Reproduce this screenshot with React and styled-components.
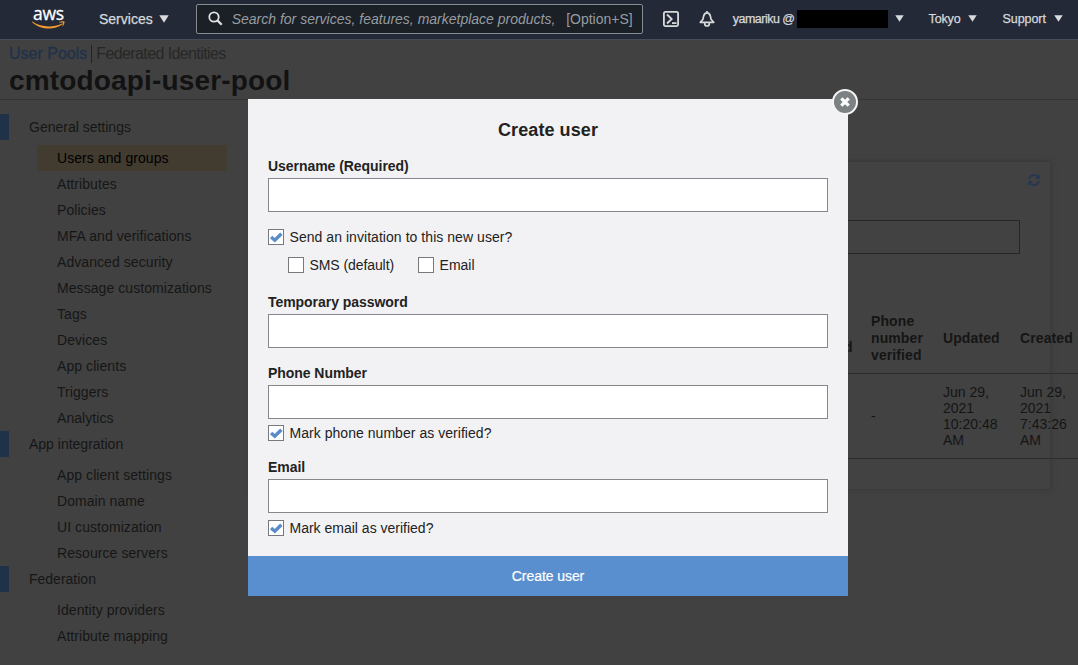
import React from "react";
import styled, { createGlobalStyle } from "styled-components";

const GlobalStyle = createGlobalStyle`
  *, *::before, *::after { box-sizing: border-box; }
  body {
    margin: 0;
    background: #414141;
    font-family: "Liberation Sans", Helvetica, Arial, sans-serif;
    font-size: 14px;
    overflow: hidden;
  }
`;

const Page = styled.div`
  position: relative;
  width: 1078px;
  height: 665px;
  overflow: hidden;
  white-space: nowrap;
`;

/* ---------- top navigation ---------- */

const TopNav = styled.header`
  display: flex;
  align-items: center;
  height: 40px;
  padding: 0 15px 2px 32px;
  background: #242937;
  border-bottom: 1px solid #474b5a;
  color: #d8dadc;
`;

const Logo = styled.div`
  flex: none;
  width: 33px;
  height: 22px;
  margin-right: 34px;
  display: flex;
  flex-direction: column;
  align-items: center;
  color: #fff;
`;

const LogoText = styled.span`
  height: 13px;
  font: 17.5px/10px "Open Sans", sans-serif;
  font-weight: 500;
  letter-spacing: -0.2px;
  -webkit-text-stroke: 0.3px #fff;
`;

const NavItem = styled.div`
  flex: none;
  display: flex;
  align-items: center;
  gap: ${(p) => p.$gap || 8}px;
  margin-right: ${(p) => p.$after || 0}px;
  font-size: ${(p) => p.$size || 12.5}px;
  letter-spacing: ${(p) => p.$track || 0}px;
  -webkit-text-stroke: 0.25px currentColor;
`;

const SearchBox = styled.div`
  flex: none;
  display: flex;
  align-items: center;
  width: 447px;
  height: 30px;
  margin-right: 20px;
  padding: 0 9px 0 11px;
  border: 1px solid #858d90;
  border-radius: 2px;
  background: #1b1f26;
  color: #969da1;
`;

const SearchHint = styled.span`
  flex: 1;
  margin-left: 9px;
  font-style: italic;
  font-size: 14px;
`;

const Redacted = styled.span`
  width: 91px;
  height: 18px;
  margin: 0 -1px 0 -6px;
  background: #000;
`;

const Triangle = ({ w = 9, h = 7 }) => (
  <svg width={w} height={h} viewBox="0 0 10 8" preserveAspectRatio="none">
    <path d="M0.3 0.3H9.7L5 7.8Z" fill="#d8dadc" />
  </svg>
);

/* ---------- page heading ---------- */

const Heading = styled.div`
  height: 60px;
  padding: 4px 9px 0;
  border-bottom: 1px solid #343434;
`;

const Crumbs = styled.div`
  display: flex;
  align-items: center;
  height: 19px;
  font-size: 16px;
  color: #272727;
`;

const PoolsLink = styled.span`
  padding-right: 4px;
  margin-right: 4px;
  border-right: 1px solid #222;
  color: #20314a;
  -webkit-text-stroke: 0.3px currentColor;
`;

const CrumbText = styled.span`
  letter-spacing: -0.6px;
`;

const PoolName = styled.h1`
  margin: 2px 0 0;
  font-size: 28px;
  line-height: 32px;
  font-weight: bold;
  letter-spacing: 0.16px;
  color: #121212;
`;

/* ---------- side menu ---------- */

const Columns = styled.div`
  display: flex;
  align-items: flex-start;
`;

const SideMenu = styled.nav`
  flex: none;
  width: 250px;
  padding-top: 14px;
  line-height: 26px;
  letter-spacing: 0.07px;
  color: #161616;
`;

const Section = styled.div`
  height: 26px;
  margin-bottom: 5px;
  padding-left: 20px;
  border-left: 9px solid #1f3248;
  letter-spacing: 0;
`;

const MenuItem = styled.div`
  width: 190px;
  height: 26px;
  margin-left: 37px;
  padding-left: 20px;
  border-radius: 1px;
  background: ${(p) => (p.$active ? "#423b30" : "transparent")};
  color: ${(p) => (p.$active ? "#000" : "inherit")};
`;

/* ---------- users card ---------- */

const Card = styled.section`
  flex: none;
  width: 800px;
  height: 327px;
  margin-top: 62px;
  padding: 12px 30px 0 30px;
  background: #424242;
  box-shadow: 0 0 5px 1px #383838;
`;

const CardTools = styled.div`
  display: flex;
  justify-content: flex-end;
  height: 46px;
  margin-right: -20px;
`;

const CardSearch = styled.div`
  height: 34px;
  border: 1px solid #25262a;
`;

const TableRow = styled.div`
  display: grid;
  grid-template-columns: 150px 90px 140px 132px 69px 72px 77px 90px;
  align-items: center;
  width: 820px;
  height: ${(p) => (p.$head ? 72 : 85)}px;
  margin-top: ${(p) => (p.$head ? 48 : 0)}px;
  padding-top: ${(p) => (p.$head ? 2 : 0)}px;
  border-bottom: 1px solid #2d2d2d;
  line-height: ${(p) => (p.$head ? 17 : 16)}px;
  font-weight: ${(p) => (p.$head ? "bold" : "normal")};
  letter-spacing: ${(p) => (p.$head ? 0.1 : 0)}px;
  color: #151515;
`;

const Cell = styled.div`
  padding-left: 10px;
  white-space: pre-line;
`;

/* ---------- dialog ---------- */

const Dialog = styled.div`
  position: absolute;
  top: 99px;
  left: 248px;
  width: 600px;
  height: 497px;
  background: #f2f2f4;
  color: #222;
`;

const DialogBody = styled.div`
  height: 457px;
  padding: 20px 20px 0;
`;

const DialogTitle = styled.h2`
  margin: 0 0 17px;
  text-align: center;
  font-size: 18px;
  line-height: 22px;
  letter-spacing: 0.08px;
`;

const Label = styled.label`
  display: block;
  margin-bottom: 4px;
  line-height: 16px;
  font-weight: bold;
  letter-spacing: -0.05px;
`;

const Field = styled.div`
  margin-bottom: ${(p) => p.$after}px;
`;

const TextInput = styled.input`
  display: block;
  width: 560px;
  height: 34px;
  padding: 0 8px;
  border: 1px solid #86878b;
  border-radius: 0;
  background: #fff;
  outline: none;
`;

const CheckRow = styled.div`
  display: flex;
  gap: 24px;
  height: 16px;
  margin-left: ${(p) => p.$indent || 0}px;
  margin-bottom: ${(p) => p.$after || 0}px;
`;

const CheckLabel = styled.div`
  display: flex;
  gap: 5.5px;
  line-height: 16px;
  letter-spacing: ${(p) => p.$track || 0}px;
`;

const Box = styled.span`
  display: flex;
  width: 16px;
  height: 16px;
  border: 1px solid #77797d;
  background: #fff;
`;

const SubmitButton = styled.button`
  display: block;
  width: 100%;
  height: 40px;
  border: 0;
  background: #5a8fcf;
  color: #fff;
  font: 14px "Liberation Sans", Helvetica, Arial, sans-serif;
  letter-spacing: -0.07px;
  -webkit-text-stroke: 0.2px #fff;
`;

const CloseButton = styled.button`
  position: absolute;
  top: -10px;
  right: -10px;
  display: grid;
  place-items: center;
  width: 26px;
  height: 26px;
  padding: 0;
  border: 2px solid #f5f5f6;
  border-radius: 50%;
  background: #7c8184;
`;

const Check = ({ checked, children, track }) => (
  <CheckLabel $track={track}>
    <Box>
      {checked && (
        <svg width="14" height="14" viewBox="0 0 14 14">
          <path d="M2.1 7L5.8 10.200L12.4 3.700" fill="none" stroke="#5a8bc9" strokeWidth="3.400" />
        </svg>
      )}
    </Box>
    <span>{children}</span>
  </CheckLabel>
);

const menu = [
  {
    title: "General settings",
    items: [
      "Users and groups",
      "Attributes",
      "Policies",
      "MFA and verifications",
      "Advanced security",
      "Message customizations",
      "Tags",
      "Devices",
      "App clients",
      "Triggers",
      "Analytics",
    ],
  },
  {
    title: "App integration",
    items: ["App client settings", "Domain name", "UI customization", "Resource servers"],
  },
  { title: "Federation", items: ["Identity providers", "Attribute mapping"] },
];

export default function App() {
  return (
    <Page>
      <GlobalStyle />
      <TopNav>
        <Logo>
          <LogoText>aws</LogoText>
          <svg width="33" height="9" viewBox="0 0 33 9">
            <path d="M0.3 0.600C9 6.500 21 6.800 29.500 2.700C30.600 2.200 31 3 30.200 3.600C22 9.500 8.500 9 0.100 1.200C-0.200 0.800 0 0.400 0.300 0.600Z" fill="#f29a2e" />
            <path d="M27.300 1.100C29 -0.100 32 0 32.400 0.500C32.800 1.100 32.200 3.900 30.700 5.200C30.300 5.500 30.100 5.300 30.300 4.900C30.700 3.900 31.300 2.100 31 1.700C30.700 1.300 28.800 1.400 27.700 1.600C27.200 1.700 27 1.400 27.300 1.100Z" fill="#f29a2e" />
          </svg>
        </Logo>
        <NavItem $size={14} $gap={6} $after={27}>
          Services <Triangle w={10} h={8} />
        </NavItem>
        <SearchBox>
          <svg width="15" height="15" viewBox="0 0 15 15" fill="none" stroke="#dfe1e2" strokeWidth="1.8">
            <circle cx="6" cy="6" r="4.700" />
            <path d="M9.400 9.400L13.700 13.700" strokeWidth="2.200" />
          </svg>
          <SearchHint>Search for services, features, marketplace products,</SearchHint>
          <span>[Option+S]</span>
        </SearchBox>
        <NavItem $after={20}>
          <svg width="16" height="16" viewBox="0 0 16 16" fill="none" stroke="#d8dadc" strokeWidth="1.8">
            <rect x="0.900" y="0.900" width="14.200" height="14.200" rx="1.500" />
            <path d="M4 3.500L8.700 8L4 12.500M9 12.200H13.500" />
          </svg>
        </NavItem>
        <NavItem $after={18}>
          <svg width="16" height="16" viewBox="0 0 16 16" fill="none" stroke="#d8dadc" strokeWidth="1.700" strokeLinejoin="round">
            <path d="M8 0V2M1.300 11.300H14.700L12 8.200L11.400 5.200C10.900 3 9.800 1.900 8 1.900S5.100 3 4.600 5.200L4 8.200Z" />
            <path d="M5.700 11.500V12.700C5.700 14.200 6.700 15 8 15S10.300 14.200 10.300 12.700V11.500" />
          </svg>
        </NavItem>
        <NavItem $after={25} $size={12.5} $track={-0.5}>
          yamariku @ <Redacted />
          <Triangle />
        </NavItem>
        <NavItem $after={25} $track={-0.15}>
          Tokyo <Triangle />
        </NavItem>
        <NavItem $track={-0.05}>
          Support <Triangle />
        </NavItem>
      </TopNav>

      <Heading>
        <Crumbs>
          <PoolsLink>User Pools</PoolsLink>
          <CrumbText>Federated Identities</CrumbText>
        </Crumbs>
        <PoolName>cmtodoapi-user-pool</PoolName>
      </Heading>

      <Columns>
        <SideMenu>
          {menu.map((group) => (
            <React.Fragment key={group.title}>
              <Section>{group.title}</Section>
              {group.items.map((item) => (
                <MenuItem key={item} $active={item === "Users and groups"}>
                  {item}
                </MenuItem>
              ))}
            </React.Fragment>
          ))}
        </SideMenu>

        <Card>
          <CardTools>
            <svg width="12" height="12" viewBox="0 0 1536 1536" preserveAspectRatio="none" fill="#26384f">
              <path d="M1511 928q0 5-1 7-64 268-268 434.500T764 1536q-146 0-282.500-55T238 1324l-129 129q-19 19-45 19t-45-19-19-45V960q0-26 19-45t45-19h448q26 0 45 19t19 45-19 45l-137 137q71 66 161 102t187 36q134 0 250-65t186-179q11-17 53-117 8-23 30-23h192q13 0 22.500 9.500t9.500 22.500zm25-800v448q0 26-19 45t-45 19h-448q-26 0-45-19t-19-45 19-45l138-138Q969 256 768 256q-134 0-250 65T332 500q-11 17-53 117-8 23-30 23H50q-13 0-22.500-9.500T18 608v-7q65-268 270-434.500T768 0q146 0 284 55.500T1297 212l130-129q19-19 45-19t45 19 19 45z" />
            </svg>
          </CardTools>
          <CardSearch />
          <TableRow $head>
            <Cell />
            <Cell />
            <Cell />
            <Cell />
            <Cell>{"Email\nverified"}</Cell>
            <Cell>{"Phone\nnumber\nverified"}</Cell>
            <Cell>Updated</Cell>
            <Cell>Created</Cell>
          </TableRow>
          <TableRow>
            <Cell />
            <Cell />
            <Cell />
            <Cell />
            <Cell />
            <Cell>-</Cell>
            <Cell>{"Jun 29,\n2021\n10:20:48\nAM"}</Cell>
            <Cell>{"Jun 29,\n2021\n7:43:26\nAM"}</Cell>
          </TableRow>
        </Card>
      </Columns>

      <Dialog role="dialog">
        <DialogBody>
          <DialogTitle>Create user</DialogTitle>
          <Field $after={17}>
            <Label>Username (Required)</Label>
            <TextInput />
          </Field>
          <CheckRow $after={12}>
            <Check checked track={0.05}>Send an invitation to this new user?</Check>
          </CheckRow>
          <CheckRow $indent={20} $after={21}>
            <Check track={-0.08}>SMS (default)</Check>
            <Check>Email</Check>
          </CheckRow>
          <Field $after={17}>
            <Label>Temporary password</Label>
            <TextInput />
          </Field>
          <Field $after={6}>
            <Label>Phone Number</Label>
            <TextInput />
          </Field>
          <CheckRow $after={18}>
            <Check checked track={0.04}>Mark phone number as verified?</Check>
          </CheckRow>
          <Field $after={7}>
            <Label>Email</Label>
            <TextInput />
          </Field>
          <CheckRow>
            <Check checked>Mark email as verified?</Check>
          </CheckRow>
        </DialogBody>
        <SubmitButton>Create user</SubmitButton>
        <CloseButton aria-label="Close">
          <svg width="10" height="10" viewBox="0 0 10 10">
            <path d="M1.300 1.300L8.700 8.700M8.700 1.300L1.300 8.700" stroke="#fff" strokeWidth="3.200" />
          </svg>
        </CloseButton>
      </Dialog>
    </Page>
  );
}
